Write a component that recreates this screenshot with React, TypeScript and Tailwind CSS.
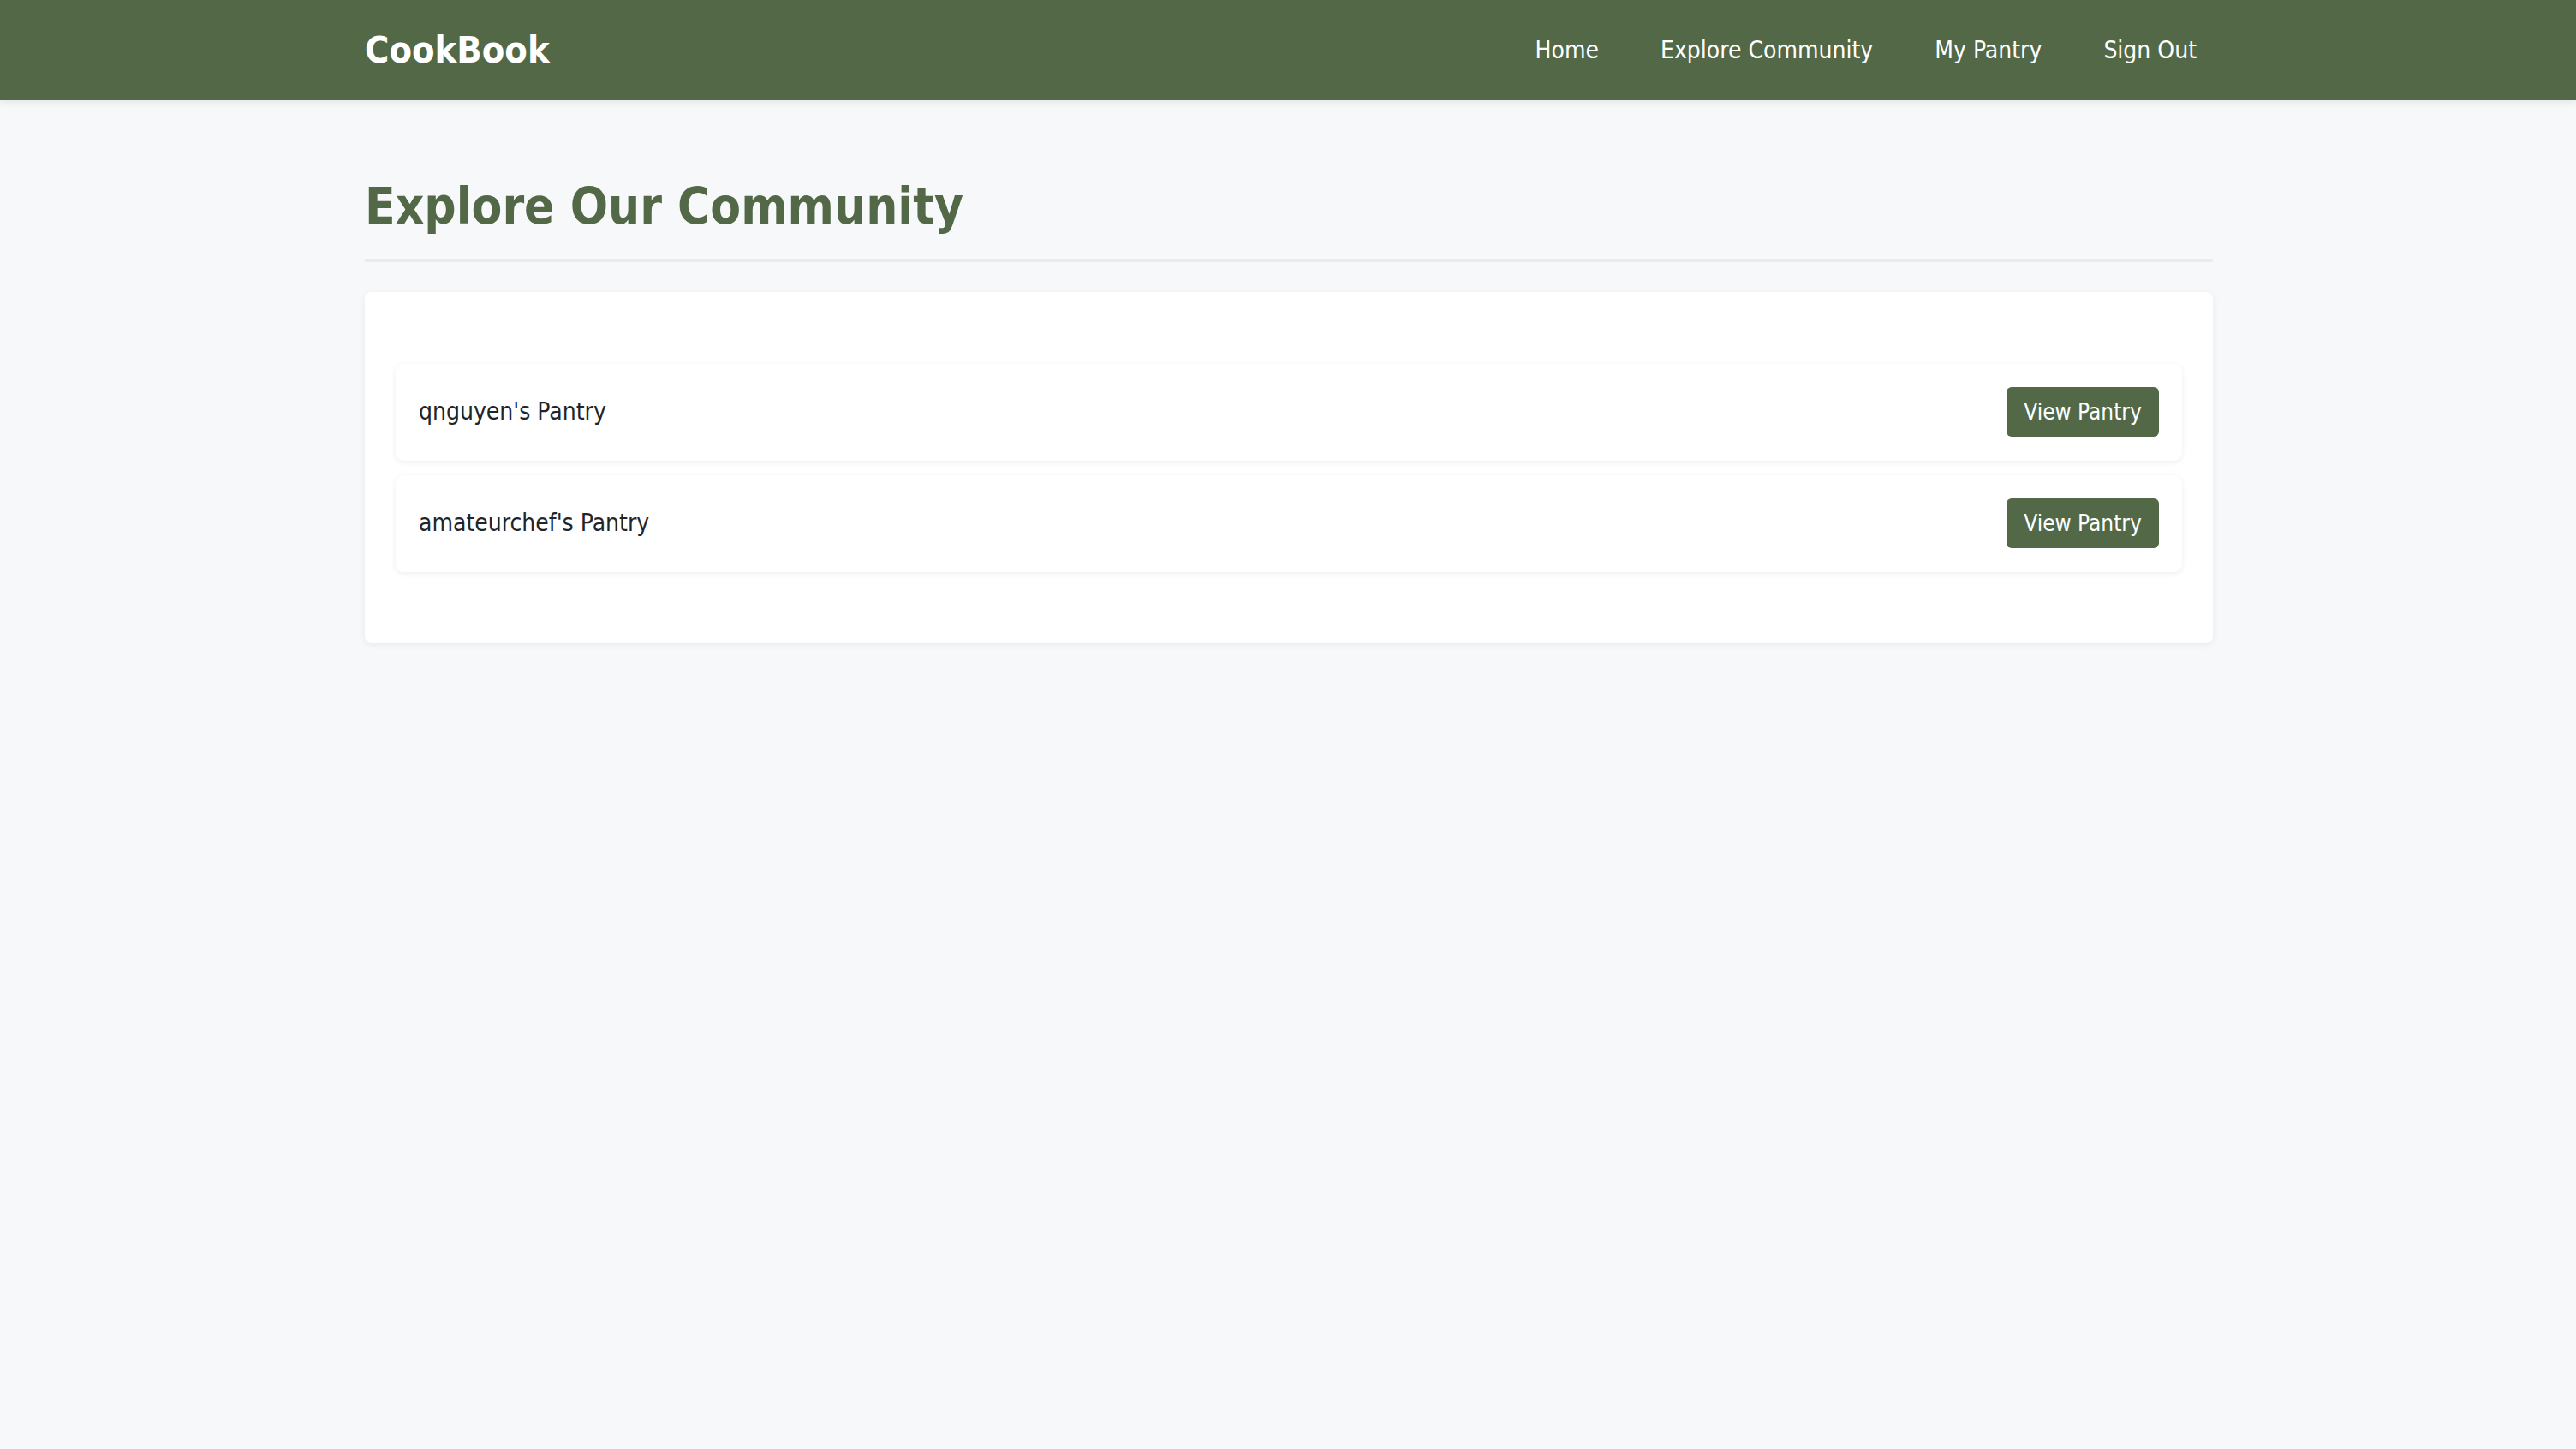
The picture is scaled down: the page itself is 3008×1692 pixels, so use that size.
import React from "react";

const pantries = ["qnguyen's Pantry", "amateurchef's Pantry"];

const navLinks = ["Home", "Explore Community", "My Pantry", "Sign Out"];

const App: React.FC = () => {
   return (
      <div className="min-h-screen bg-[#f7f8fa] text-[#212529] font-['DejaVu_Sans_Condensed','DejaVu_Sans',sans-serif]">
         {/* Top bar */}
         <header className="h-[117px] bg-[#526846] shadow-[0_3px_8px_rgba(0,0,0,0.08)]">
            <div className="w-[2160px] mx-auto h-full flex items-center justify-between pl-[2px]">
               <span className="text-[43px] font-bold text-white leading-none">CookBook</span>
               <nav className="flex items-center gap-[72px] pr-[19px]">
                  {navLinks.map((link) => (
                     <a key={link} href="#" className="text-[28px] text-white leading-none">
                        {link}
                     </a>
                  ))}
               </nav>
            </div>
         </header>

         <main className="w-[2160px] mx-auto pt-[90px] pl-[2px]">
            <h1 className="text-[58px] leading-[1.2] font-bold text-[#526846] pb-[26px] border-b-[3px] border-[#e9ecef]">
               Explore Our Community
            </h1>

            <section className="mt-[35px] bg-white rounded-[8px] shadow-[0_2px_8px_rgba(0,0,0,0.06)] px-[36px] pt-[84px] pb-[83px] flex flex-col gap-[17px]">
               {pantries.map((name) => (
                  <div
                     key={name}
                     className="h-[113px] flex items-center justify-between px-[27px] bg-white rounded-[9px] shadow-[0_2px_7px_rgba(0,0,0,0.07)]"
                  >
                     <span className="text-[28px]">{name}</span>
                     <button className="w-[178px] h-[58px] bg-[#526846] text-white text-[26px] rounded-[6px] flex items-center justify-center">
                        View Pantry
                     </button>
                  </div>
               ))}
            </section>
         </main>
      </div>
   );
};

export default App;
